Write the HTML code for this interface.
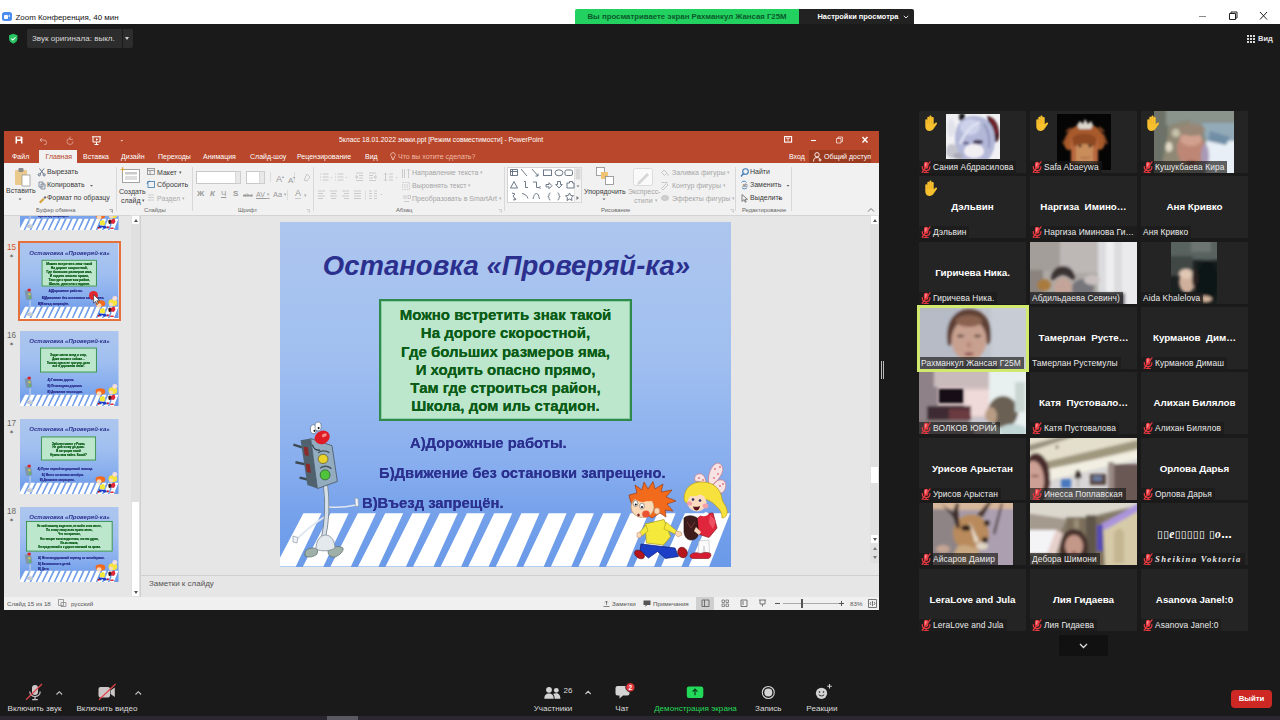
<!DOCTYPE html>
<html lang="ru">
<head>
<meta charset="utf-8">
<title>Zoom Конференция</title>
<style>
*{box-sizing:border-box;margin:0;padding:0}
html,body{width:1280px;height:720px;overflow:hidden;background:#1a1a1a;font-family:"Liberation Sans",sans-serif;}
.abs{position:absolute}
#titlebar{position:absolute;left:0;top:0;width:1280px;height:24px;background:#fff}
#titlebar .ttl{position:absolute;left:15.500px;top:12.500px;font-size:7.950px;line-height:10px;color:#111;white-space:nowrap}
#zicon{position:absolute;left:2px;top:12px;width:10px;height:9px;border-radius:2.5px;background:#4a8cf0}
#zicon i{position:absolute;left:2px;top:3px;width:4px;height:3.500px;background:#fff;border-radius:1px}
#zicon b{position:absolute;left:6.300px;top:3.300px;border:1.500px solid transparent;border-right:2px solid #fff;border-left:0}
#banner{position:absolute;left:575px;top:9px;width:224px;height:15px;background:#23d160;border-radius:2px 0 0 0;color:#0a5a2a;font-size:7.8px;font-weight:bold;text-align:center;line-height:15px;white-space:nowrap}
#viewset{position:absolute;left:799px;top:9px;width:115px;height:15px;background:#222;border-radius:0 2px 0 0;color:#fff;font-size:7.450px;font-weight:bold;text-align:left;padding-left:18.500px;line-height:15px;white-space:nowrap}
#origsnd{position:absolute;left:27px;top:29px;width:95px;height:19px;background:#2d2d2d;border-radius:2px 0 0 2px;color:#dcdcdc;font-size:8.050px;line-height:19px;padding-left:5px;white-space:nowrap}
#origdd{position:absolute;left:122.500px;top:29px;width:10px;height:19px;background:#2d2d2d;border-radius:0 2px 2px 0}
#origdd i{position:absolute;left:2.500px;top:8px;border:2.500px solid transparent;border-top:3px solid #d0d0d0;border-bottom:0}
#toolbar{position:absolute;left:0;top:0;width:1280px;height:0}
#toolbar svg{top:676px !important}
.tb{position:absolute;top:703.500px;font-size:8.100px;line-height:10px;color:#dcdcdc;white-space:nowrap;transform:translateX(-50%)}
#leave{position:absolute;left:1231px;top:690px;width:41px;height:18px;border-radius:4px;background:#cd2823;color:#fff;font-weight:bold;font-size:7.800px;line-height:18px;text-align:center}
#botstrip{position:absolute;left:0;top:716px;width:1280px;height:4px;background:#2a2730}
#bothandle{position:absolute;left:327px;top:716px;width:31px;height:4px;background:#5a5860}
/* participants */
.tile{position:absolute;width:107px;height:62px;background:#242424;overflow:hidden}
.tile .big{position:absolute;left:0;right:0;top:25px;text-align:center;color:#fff;font-weight:bold;font-size:9.8px;white-space:pre}
.tile .nm{position:absolute;left:0;bottom:0;height:12px;padding:0 3px 0 2px;background:rgba(26,26,26,.68);color:#ececec;font-size:8.4px;line-height:12px;white-space:nowrap;letter-spacing:.1px}
.tile .nm.m{padding-left:14px}
.mic{position:absolute;left:2px;bottom:0;width:10px;height:12.500px;z-index:2}
.hand{position:absolute;left:5.500px;top:4.200px;width:12.500px;height:16px;z-index:2}

.vid{position:absolute;top:0;left:0;overflow:hidden;line-height:0}
.vid svg{display:block}
.av1{left:27px;top:3px;width:54px;height:45px}
.av2{left:27px;top:3px;width:54px;height:56px}
.v3{left:13px;width:80px;height:62px}
.v9{left:30px;width:46px;height:62px}
.v19{left:14px;width:80px;height:62px}
.v8,.v10,.v13,.v17,.v20{width:107px;height:62px}
#active{position:absolute;left:917px;top:304.500px;width:112px;height:67px;border:3px solid #d2e970;pointer-events:none;z-index:5}
#morebtn{position:absolute;left:1059px;top:635px;width:49px;height:21px;background:#111;border-radius:2px;text-align:center;line-height:0}
#morebtn svg{margin-top:8px}
#handle{position:absolute;left:881px;top:361px;width:3px;height:18px;border-left:1px solid #bbb;border-right:1px solid #bbb}
.fancy{font-family:"Liberation Serif","DejaVu Serif",serif;font-style:italic;font-weight:bold;font-size:8.600px;letter-spacing:1.350px}
.tofu{font-family:"DejaVu Sans","Liberation Sans",sans-serif;letter-spacing:.3px;font-size:10.500px}
.tofu i{font-family:"Liberation Serif",serif;font-size:11.500px}
/* ppt */
#ppt{position:absolute;left:4px;top:131px;width:875px;height:479px;background:#e6e6e6;overflow:hidden}
#ppt .title{position:absolute;left:0;top:0;width:875px;height:32px;background:#b9472b}
#ppt .ribbon{position:absolute;left:0;top:32px;width:875px;height:53px;background:#f1f1f1;border-bottom:1px solid #d4d4d4}
#ppt .status{position:absolute;left:0;top:466px;width:875px;height:13px;background:#f0f0f0}

#ppt .t{position:absolute;white-space:nowrap;font-size:7px;color:#444;line-height:8px}
#ppt .tabs{position:absolute;left:0;top:19px;width:875px;height:13px}
#ppt .tabs .t{top:3px;color:#fff;font-size:7px}
#ppt .tabsel{position:absolute;left:35px;top:0;width:38px;height:13px;background:#f1f1f1}
#ppt .share{position:absolute;left:805px;top:0;width:62px;height:13px;background:#9c3a20}
#ppt .ribbon .t{color:#3b3b3b}
#ppt .ribbon .t.g{color:#aaa}
#ppt .ribbon .t.g2{color:#9a9a9a}
#ppt .ribbon .t.g3{color:#a6a6a6}
#ppt .ribbon .t.lb{color:#666;font-size:5.800px;line-height:7px;margin-top:-1px}
#ppt .status .t{font-size:6.200px;color:#555}
.dd{font-size:5px;vertical-align:1px;opacity:.8}
.stitle{position:absolute;left:0;top:28px;width:451px;text-align:center;font-size:27.500px;font-weight:bold;font-style:italic;color:#2b2f8e;white-space:nowrap;line-height:32px;padding-left:2px}
.gbox{position:absolute;left:99px;top:77px;width:253px;height:122px;background:#bde7cd;border:2.500px solid #2f8a4c;box-shadow:inset 0 0 0 1px #8fd0a6;text-shadow:0 0 .5px #0b5c17;text-align:center;font-weight:bold;font-size:15px;color:#0b5c17;line-height:18.300px;padding-top:5px;white-space:nowrap}
.ans{position:absolute;font-weight:bold;font-size:14.800px;color:#2c3190;white-space:nowrap;line-height:18px;margin-top:1px;text-shadow:0 0 .4px #2c3190}
.tpanel{position:absolute;left:0;top:85px;width:127px;height:381px;overflow:hidden}
.tpanel .th{position:absolute;left:16px;width:98.500px;height:75.400px;overflow:hidden;margin-top:-85px}
.tpanel .thin{position:absolute;left:0;top:0;width:451px;height:345px;transform:scale(.2185);transform-origin:0 0;background:linear-gradient(#adc6ee,#a0bff0 40%,#88aeee 70%,#729fea 88%,#6a9ae8)}
.tpanel .gbox{border-width:4px}
.tpanel .thsel{position:absolute;left:13.500px;top:24.500px;width:103.500px;height:80.500px;border:2px solid #e6703c;background:#fff}
.tpanel .t{margin-top:-85px}
.pscroll{position:absolute;left:127px;top:84px;width:9px;height:382px;background:#e0e0e0}
.rscroll{position:absolute;left:866px;top:84px;width:9px;height:348px;background:#e0e0e0}
.sbtn{position:absolute;left:1px;width:7px;height:8px;background:#fff}
.sbtn i{position:absolute;left:1.500px;top:2.500px;border:2px solid transparent}
.sbtn i.up{border-top:0;border-bottom:3px solid #555}
.sbtn i.dn{border-bottom:0;border-top:3px solid #555}
.sthumb{position:absolute;left:1px;width:7px;background:#fff}
.vsplit{position:absolute;left:136px;top:84px;width:1px;height:382px;background:#d0d0d0}
.notesline{position:absolute;left:137px;top:444px;width:738px;height:1px;background:#cfcfcf}
#slide{position:absolute;left:276px;top:91px;width:451px;height:345px;background:linear-gradient(#adc6ee,#a0bff0 40%,#88aeee 70%,#729fea 88%,#6a9ae8);overflow:hidden}
</style>
</head>
<body>
<div id="titlebar"><div id="zicon"><i></i><b></b></div><div class="ttl">Zoom Конференция, 40 мин</div></div>
<div id="banner">Вы просматриваете экран Рахманкул Жансая Г25М</div>
<div id="viewset">Настройки просмотра<svg class="abs" style="left:104px;top:6px" width="6" height="4" viewBox="0 0 6 4"><path d="M.8.800l2.200 2.200L5.200.800" fill="none" stroke="#ddd" stroke-width="1"/></svg></div>
<svg class="abs" style="left:1195px;top:8px" width="80" height="14" viewBox="0 0 80 14"><path d="M4 8.500h7" stroke="#8a8a8a" stroke-width="1"/><path d="M34.500 5.500h6v6h-6zM36 5.500V4h6v6h-1.500" fill="none" stroke="#222" stroke-width="1"/><path d="M65 4l7 7.500M72 4l-7 7.500" stroke="#222" stroke-width="1"/></svg>
<svg class="abs" style="left:8px;top:32.500px" width="10.500" height="11.500" viewBox="0 0 12 13"><path d="M6 .8l4.800 1.800v3.600c0 2.800-2 4.800-4.800 6-2.800-1.200-4.800-3.200-4.800-6V2.600z" fill="#28c463"/><path d="M3.800 6.300l1.700 1.700 3-3.200" fill="none" stroke="#fff" stroke-width="1.200"/></svg>
<div id="origsnd">Звук оригинала: выкл.</div><div id="origdd"><i></i></div>
<svg class="abs" style="left:1247px;top:34.500px" width="8" height="8" viewBox="0 0 8 8"><path d="M0 0h2v2H0zM3 0h2v2H3zM6 0h2v2H6zM0 3h2v2H0zM3 3h2v2H3zM6 3h2v2H6zM0 6h2v2H0zM3 6h2v2H3zM6 6h2v2H6z" fill="#d8d8d8"/></svg>
<div class="abs" style="left:1258px;top:33.500px;font-size:7.500px;line-height:10px;color:#e4e4e4;font-weight:bold">Вид</div>
<div id="ppt">
<div class="title">
 <svg class="abs" style="left:11px;top:5px" width="120" height="9" viewBox="0 0 120 9"><g fill="none" stroke="#fff" stroke-width="1"><path d="M.5.5h6l1 1v6h-7z" fill="#fff" stroke="none"/><rect x="2" y="1.200" width="3.500" height="2.200" fill="#b9472b" stroke="none"/><rect x="2" y="5" width="4" height="3" fill="#b9472b" stroke="none"/><g transform="translate(-3 0)"><path d="M30 2l-2 2 2 2M28 4h4a2.500 2.500 0 0 1 0 5" opacity=".45"/><path d="M58 2.500a3 3 0 1 0 3 3M58 .5v3h3" opacity=".4"/><path d="M80 .8h9M81 1v5h7V1M84.500 6v2M82.500 8.500h4"/><path d="M84 2.200v2.600l2.200-1.300z" fill="#fff" stroke="none"/></g><path d="M105.500 4h2.500l-1.250 1.500z" fill="#fff" stroke="none" opacity=".8"/></g></svg>
 <div class="t" style="left:335px;top:5px;width:204px;text-align:center;font-size:6.750px;color:#fff">5класс 18.01.2022 знаки.ppt [Режим совместимости] - PowerPoint</div>
 <svg class="abs" style="left:780px;top:4px" width="90" height="10" viewBox="0 0 90 10"><g fill="none" stroke="#fff" stroke-width="1.100"><rect x=".6" y="1.600" width="7" height="5.500"/><path d="M2 3.200h4M4 3.200v3" stroke-width=".8"/><path d="M27 5.500h5"/><path d="M52.500 3.500h4.500v4.500h-4.500zM54 3.500V2h4.500v4.500H57" stroke-width=".9" opacity=".75"/><path d="M78.500 2l5 5.500M83.500 2l-5 5.500" stroke-width="1.400"/></g></svg>
 <div class="tabs">
  <div class="t" style="left:8px">Файл</div>
  <div class="tabsel"></div><div class="t" style="left:41.500px;color:#b9472b">Главная</div>
  <div class="t" style="left:79px">Вставка</div>
  <div class="t" style="left:117px">Дизайн</div>
  <div class="t" style="left:154px">Переходы</div>
  <div class="t" style="left:199px">Анимация</div>
  <div class="t" style="left:246px">Слайд-шоу</div>
  <div class="t" style="left:293px">Рецензирование</div>
  <div class="t" style="left:361px">Вид</div>
  <svg class="abs" style="left:386px;top:2px" width="6" height="9" viewBox="0 0 6 9"><path d="M3 .6a2.300 2.300 0 0 0-1.300 4.200v1.400h2.600V4.800A2.300 2.300 0 0 0 3 .6zM2 7.500h2" fill="none" stroke="#f4c9b8" stroke-width=".8"/></svg>
  <div class="t" style="left:394px;color:#f0bba6">Что вы хотите сделать?</div>
  <div class="t" style="left:785px">Вход</div>
  <div class="share"></div>
  <svg class="abs" style="left:809px;top:1.500px" width="9" height="10" viewBox="0 0 9 10"><circle cx="4" cy="2.800" r="2.200" fill="none" stroke="#fff" stroke-width=".9"/><path d="M.5 9.500c0-3 1.500-4 3.500-4s2.600.8 3 1.600M7 6.500v3M5.600 8h2.900" fill="none" stroke="#fff" stroke-width=".9"/></svg>
  <div class="t" style="left:820px">Общий доступ</div>
 </div>
</div>
<div class="ribbon">
<svg class="abs" style="left:0;top:0" width="875" height="52" viewBox="0 0 875 52">
 <g stroke="#d8d8d8" stroke-width="1"><path d="M112.500 4v44M188.500 4v44M309.500 4v44M500.500 4v44M731.500 4v44M787.500 4v44"/></g>
 <!-- paste -->
 <rect x="11" y="7" width="12" height="15" rx="1" fill="#e9c98c"/><rect x="14.500" y="5" width="5" height="4" rx="1" fill="#8a8a8a"/><path d="M18 12h8v11h-8z" fill="#fff" stroke="#9a9a9a" stroke-width=".8"/>
 <path d="M14.500 35.500h3l-1.500 1.800z" fill="#666"/>
 <!-- cut copy brush -->
 <g fill="none" stroke="#5a6a80" stroke-width=".9"><path d="M35.500 5.500l4 5.500M40 5.500l-4 5.500"/><circle cx="35.300" cy="11.800" r="1.100"/><circle cx="40.200" cy="11.800" r="1.100"/><path d="M35 19h4v5h-4zM37 21h4v5h-4z" stroke="#7a8699"/></g>
 <path d="M35 39l4-4 1.500 1.500-4 4z" fill="#d9a23a"/><path d="M39.500 34.500l1.500-1.500 1.500 1.500-1.500 1.500z" fill="#6a6a6a"/>
 <path d="M86 22h3l-1.500 1.800z" fill="#666"/>
 <g fill="none" stroke="#777" stroke-width=".6"><path d="M105.500 46.500h3v3M106.500 47.500l2 2"/><path d="M302.500 46.500h3v3M303.500 47.500l2 2" stroke="#bbb"/><path d="M494.500 46.500h3v3M495.500 47.500l2 2" stroke="#bbb"/><path d="M726.500 46.500h3v3M727.500 47.500l2 2" stroke="#bbb"/></g>
 <!-- new slide -->
 <rect x="118.500" y="6.500" width="17" height="13" fill="#fff" stroke="#9a9a9a" stroke-width=".9"/><rect x="121" y="9" width="12" height="2.500" fill="#c9c9c9"/><rect x="121" y="13" width="12" height="4" fill="#dedede"/><path d="M118 5l1.500 0M116.500 6.500h4M118.500 4.500v4" stroke="#e0a030" stroke-width=".9"/>
 <g fill="none" stroke="#888" stroke-width=".8"><rect x="143.500" y="5.500" width="7" height="6"/><path d="M143.500 7.500h7M146 7.500v4"/><rect x="144" y="18.500" width="6.500" height="6" stroke="#3a7ab0"/><path d="M143 21a3 3 0 0 1 3-3" stroke="#3a7ab0"/><path d="M144 32h6M144 34.500h6M144 37h6" stroke="#c4c4c4"/></g>
 <!-- font boxes -->
 <rect x="192.500" y="8.500" width="44" height="12" fill="#fff" stroke="#c8c8c8"/><rect x="231.500" y="8.500" width="5" height="12" fill="#e8e8e8" stroke="#c8c8c8" stroke-width=".6"/>
 <rect x="242.500" y="8.500" width="18" height="12" fill="#fff" stroke="#c8c8c8"/><rect x="255.500" y="8.500" width="5" height="12" fill="#e8e8e8" stroke="#c8c8c8" stroke-width=".6"/>
 <path d="M300 17l3-6 3 3-3 4z" fill="none" stroke="#c2c2c2" stroke-width=".9"/>
 <path d="M266.500 9v10M290.500 9v10M283.500 27v10" stroke="#dcdcdc"/>
 <g stroke="#c6c6c6" stroke-width=".9" fill="none"><path d="M316 11h1M318.500 11h6M316 14h1M318.500 14h6M316 17h1M318.500 17h6"/><path d="M331 11h1M333.500 11h6M331 14h1M333.500 14h6M331 17h1M333.500 17h6"/><path d="M326.500 14h2l-1 1.200zM341.500 14h2l-1 1.200z" fill="#c6c6c6" stroke="none"/><path d="M352 10h7M355 12.500h4M355 15h4M352 17.500h7M352 12.500l2 1.500-2 1.500z"/><path d="M365 10h7M365 12.500h4M365 15h4M365 17.500h7M372 12.500l-2 1.500 2 1.500z"/><path d="M381.500 10v8M380 11.500l1.500-1.500 1.500 1.500M380 16.500l1.500 1.500 1.500-1.500M385 11h4M385 14h4M385 17h4"/><path d="M391.500 14h2l-1 1.200z" fill="#c6c6c6" stroke="none"/>
 <path d="M314 28h7M314 30.500h5M314 33h7M314 35.500h5"/><path d="M326 28h7M327 30.500h5M326 33h7M327 30.500h5M327 35.500h5"/><path d="M338 28h7M340 30.500h5M338 33h7M340 35.500h5"/><path d="M350 28h7M350 30.500h7M350 33h7M350 35.500h7"/><path d="M365 28h3M370 28h3M365 30.500h3M370 30.500h3M365 33h3M370 33h3M365 35.500h3M370 35.500h3"/><path d="M376.500 31h2l-1 1.200z" fill="#c6c6c6" stroke="none"/><path d="M361.500 27v10" stroke="#dcdcdc"/>
 <path d="M398.500 6v9M400.500 6v9M403 7.500l1.500-1.500 1.500 1.500M404.500 6v9"/><path d="M398.500 19.500h7v7h-7zM400 22h4M400 24h4" stroke-dasharray="1.500 1"/><path d="M399 33h4M399 35h4M404 32.500h2.500v3H404zM400 38.500h5"/></g>
 <!-- shapes gallery -->
 <rect x="503.500" y="4.500" width="74" height="35" fill="#fff" stroke="#d2d2d2"/><rect x="570.500" y="4.500" width="7" height="35" fill="#f4f4f4" stroke="#d2d2d2" stroke-width=".6"/><rect x="571.500" y="5.500" width="5" height="11" fill="#d9d9d9"/>
 <path d="M572.500 22.500h3l-1.500 1.800zM572.500 33l2.500 2-2.500 2" fill="#777" stroke="none"/>
 <g fill="none" stroke="#5f6b7a" stroke-width=".9"><path d="M506.500 6.500h7v6h-7zM506.500 8.500h7M508.500 6.500v6"/><path d="M517 6l6 7M528 6l6 7M534 13v-2.500M534 13h-2.500"/><rect x="539.500" y="7" width="8" height="5.500"/><ellipse cx="555" cy="9.800" rx="4" ry="3"/><rect x="561" y="7" width="7.500" height="5.500" rx="1.500"/>
 <path d="M510 18.500l3.500 6.500h-7zM520 18.500h1.500v6h2.500M529 19h3.500v5.500h3M536.500 26l-1.200-1.500 1.200-1.500M542 21.500h3v-1.800l3 3-3 3v-1.800h-3zM553.500 18.500h3v3h1.800l-3.300 3.500-3.300-3.500h1.800zM563 25v-5h2.500v-1.500h3v1.500H570v5z"/>
 <path d="M508 30l3 1-2 2 3 4M511 37l-1.800-.2M511 37l.2-1.800M518 30.500c3 .5 5 2 6 5M529 36c1-4 2-5.500 3.500-5.500s2 2 3 5.500M546.500 30c-1.500 0-1.500 1.200-1.500 2s-.3 1.500-1.200 1.500c.9 0 1.200.8 1.200 1.500s0 2 1.500 2M553.500 30c1.500 0 1.500 1.200 1.500 2s.3 1.500 1.200 1.500c-.9 0-1.200.8-1.200 1.500s0 2-1.500 2M565.500 30l1.200 2.500 2.800.3-2 1.900.5 2.800-2.500-1.400-2.500 1.400.5-2.800-2-1.900 2.800-.3z"/></g>
 <!-- arrange -->
 <rect x="592.500" y="4.500" width="8" height="8" fill="#fff" stroke="#8a8a8a" stroke-width=".8"/><rect x="597" y="9" width="7" height="7" fill="#eec372"/><rect x="601.500" y="13.500" width="8" height="8" fill="#fff" stroke="#8a8a8a" stroke-width=".8"/>
 <path d="M598.500 35.500h3l-1.500 1.800z" fill="#666"/>
 <!-- express styles -->
 <rect x="629.500" y="5.500" width="19" height="17" rx="2" fill="#fafafa" stroke="#dcdcdc"/><path d="M634 19l9-9 2 2-9 9-3 1z" fill="#d6d6d6"/>
 <g fill="none" stroke="#c2c2c2" stroke-width=".9"><path d="M660 7l3 3-2.500 2.500-3-3zM663.500 10.500c1 1 1 2 .5 2.500"/><path d="M657.500 19.500h6M657.500 25.500l5-5 1.500 1.500-5 5z"/><ellipse cx="661" cy="35" rx="3.500" ry="2.500" fill="#d0d0d0"/></g>
 <!-- find -->
 <circle cx="741.500" cy="8.500" r="2.800" fill="none" stroke="#3a7ab8" stroke-width="1.100"/><path d="M739.500 10.500l-2.500 3" stroke="#3a7ab8" stroke-width="1.300"/>
 <path d="M737.500 19.500a3 3 0 0 1 5 0M743 24.500a3 3 0 0 1-5 0" fill="none" stroke="#3a7ab8" stroke-width=".9"/><text x="738.500" y="24" font-size="4.500" fill="#555" font-family="Liberation Sans, sans-serif">ab</text>
 <path d="M738 31.500v7l2-1.800 1.300 2.600 1-.5-1.300-2.500h2.500z" fill="none" stroke="#666" stroke-width=".8"/>
 <path d="M782.500 22h3l-1.500 1.800zM774 35h3l-1.500 1.800z" fill="#666"/>
 <path d="M864 48.500l3-3 3 3" fill="none" stroke="#666" stroke-width=".9"/>
</svg>
<div class="t" style="left:2px;top:24px">Вставить</div>
<div class="t" style="left:43px;top:5px">Вырезать</div>
<div class="t" style="left:43px;top:18px">Копировать</div>
<div class="t" style="left:43px;top:31px">Формат по образцу</div>
<div class="t lb" style="left:32px;top:45px">Буфер обмена</div>
<div class="t" style="left:115px;top:25px">Создать</div>
<div class="t" style="left:117px;top:33px">слайд <span class="dd">▾</span></div>
<div class="t" style="left:153px;top:5px">Макет <span class="dd">▾</span></div>
<div class="t" style="left:153px;top:18px">Сбросить</div>
<div class="t g" style="left:153px;top:31px">Раздел <span class="dd">▾</span></div>
<div class="t lb" style="left:140px;top:45px">Слайды</div>
<div class="t g2" style="left:272px;top:9px;font-size:9px;line-height:10px">A<sup style="font-size:4px">▴</sup></div>
<div class="t g2" style="left:284px;top:10px;font-size:8px;line-height:10px">A<sup style="font-size:4px">▾</sup></div>
<div class="t g2" style="left:193px;top:27px;font-size:8px;font-weight:bold">Ж</div>
<div class="t g2" style="left:206px;top:27px;font-size:8px;font-style:italic;font-weight:bold">К</div>
<div class="t g2" style="left:217px;top:27px;font-size:8px;text-decoration:underline">Ч</div>
<div class="t g2" style="left:229px;top:27px;font-size:8px;font-weight:bold">S</div>
<div class="t g2" style="left:239px;top:28px;font-size:6px;text-decoration:line-through">abc</div>
<div class="t g2" style="left:252px;top:27px;font-size:7px;text-decoration:underline">AV <span class="dd">▾</span></div>
<div class="t g2" style="left:269px;top:27px;font-size:7.500px">Aa <span class="dd">▾</span></div>
<div class="t g2" style="left:291px;top:26px;font-size:9px;border-bottom:1.500px solid #c9c9c9;line-height:9px">A</div><div class="t g2" style="left:300px;top:28px"><span class="dd">▾</span></div>
<div class="t lb" style="left:234px;top:45px">Шрифт</div>
<div class="t g3" style="left:408px;top:5px">Направление текста <span class="dd">▾</span></div>
<div class="t g3" style="left:408px;top:18px">Выровнять текст <span class="dd">▾</span></div>
<div class="t g3" style="left:408px;top:31px">Преобразовать в SmartArt <span class="dd">▾</span></div>
<div class="t lb" style="left:392px;top:45px">Абзац</div>
<div class="t" style="left:580px;top:25px">Упорядочить</div>
<div class="t g3" style="left:624px;top:25px">Экспресс-</div>
<div class="t g3" style="left:630px;top:33px">стили <span class="dd">▾</span></div>
<div class="t g3" style="left:668px;top:5px">Заливка фигуры <span class="dd">▾</span></div>
<div class="t g3" style="left:668px;top:18px">Контур фигуры <span class="dd">▾</span></div>
<div class="t g3" style="left:668px;top:31px">Эффекты фигуры <span class="dd">▾</span></div>
<div class="t lb" style="left:597px;top:45px">Рисование</div>
<div class="t" style="left:746px;top:5px">Найти</div>
<div class="t" style="left:746px;top:18px">Заменить</div>
<div class="t" style="left:746px;top:31px">Выделить</div>
<div class="t lb" style="left:738px;top:45px">Редактирование</div>

</div>
<div class="tpanel"><div class="th" style="top:24px"><div class="thin"><svg class="abs" style="left:0;top:0" width="451" height="345" viewBox="0 0 451 345"><path d="M23.4 291.3 h18 L15.8 344.6 h-20.500 z M50.6 291.3 h18 L43.4 344.6 h-20.500 z M77.9 291.3 h18 L70.9 344.6 h-20.500 z M105.2 291.3 h18 L98.5 344.6 h-20.500 z M132.4 291.3 h18 L126.0 344.6 h-20.500 z M159.7 291.3 h18 L153.6 344.6 h-20.500 z M186.9 291.3 h18 L181.2 344.6 h-20.500 z M214.2 291.3 h18 L208.7 344.6 h-20.500 z M241.4 291.3 h18 L236.3 344.6 h-20.500 z M268.6 291.3 h18 L263.8 344.6 h-20.500 z M295.9 291.3 h18 L291.4 344.6 h-20.500 z M323.1 291.3 h18 L319.0 344.6 h-20.500 z M350.4 291.3 h18 L346.5 344.6 h-20.500 z M377.6 291.3 h18 L374.1 344.6 h-20.500 z M404.9 291.3 h18 L401.6 344.6 h-20.500 z M432.1 291.3 h18 L429.2 344.6 h-20.500 z" fill="#fff"/><g><path d="M21 218l10-1.500L51.500 223l5 32-19 7-10-3z" fill="#7f98ac"/><ellipse cx="42" cy="215" rx="8" ry="7" fill="#df1f26"/><ellipse cx="43" cy="235" rx="5" ry="4.500" fill="#e9d22c"/><ellipse cx="45" cy="249.500" rx="5" ry="4.500" fill="#4fc43a"/><path d="M45.500 263Q49 290 43.500 316" stroke="#d6dfe8" stroke-width="4" fill="none"/><ellipse cx="45" cy="326" rx="14" ry="9" fill="#c4ccd2"/>
<ellipse cx="368" cy="277" rx="22" ry="15" fill="#f26a1e"/><ellipse cx="362" cy="286" rx="11" ry="10" fill="#fbd8b6"/><path d="M365 302l19-4 7 17-7 8-17-2z" fill="#f5e93a"/><path d="M361 322l34 4 3 9-13 2-8-7-9 6-8-7z" fill="#1d3cc6"/><ellipse cx="360" cy="333" rx="6" ry="4" fill="#b4161f"/><ellipse cx="402" cy="331" rx="5" ry="5" fill="#b4161f"/>
<ellipse cx="425" cy="274" rx="20" ry="16" fill="#f7e23e"/><ellipse cx="434" cy="253" rx="11" ry="11" fill="#f7dede"/><ellipse cx="417" cy="281" rx="9" ry="9" fill="#fbdcc0"/><path d="M417 296l16-5 4 15-8 10-13-4z" fill="#e0283c"/><ellipse cx="411" cy="306" rx="7" ry="11" fill="#3c1d1e"/><rect x="419" y="316" width="10" height="15" fill="#fafafa"/><ellipse cx="421" cy="335" rx="10" ry="3.500" fill="#d61f30"/></g></svg><div class="stitle">Остановка «Проверяй-ка»</div><div class="gbox" style="left:99px;top:77px;width:253px;height:122px;padding-top:5px;font-size:15px;line-height:18.3px"><div>Можно встретить знак такой</div><div>На дороге скоростной,</div><div>Где больших размеров яма,</div><div>И ходить опасно прямо,</div><div>Там где строиться район,</div><div>Школа, дом иль стадион.</div></div><div class="ans" style="left:130px;top:211px;font-size:14.8px">А)Дорожные работы.</div><div class="ans" style="left:99px;top:241px;font-size:14.8px">Б)Движение без остановки запрещено.</div><div class="ans" style="left:82px;top:271px;font-size:14.8px">В)Въезд запрещён.</div></div></div>
<div class="thsel"></div>
<div class="th" style="top:112px"><div class="thin"><svg class="abs" style="left:0;top:0" width="451" height="345" viewBox="0 0 451 345"><path d="M23.4 291.3 h18 L15.8 344.6 h-20.500 z M50.6 291.3 h18 L43.4 344.6 h-20.500 z M77.9 291.3 h18 L70.9 344.6 h-20.500 z M105.2 291.3 h18 L98.5 344.6 h-20.500 z M132.4 291.3 h18 L126.0 344.6 h-20.500 z M159.7 291.3 h18 L153.6 344.6 h-20.500 z M186.9 291.3 h18 L181.2 344.6 h-20.500 z M214.2 291.3 h18 L208.7 344.6 h-20.500 z M241.4 291.3 h18 L236.3 344.6 h-20.500 z M268.6 291.3 h18 L263.8 344.6 h-20.500 z M295.9 291.3 h18 L291.4 344.6 h-20.500 z M323.1 291.3 h18 L319.0 344.6 h-20.500 z M350.4 291.3 h18 L346.5 344.6 h-20.500 z M377.6 291.3 h18 L374.1 344.6 h-20.500 z M404.9 291.3 h18 L401.6 344.6 h-20.500 z M432.1 291.3 h18 L429.2 344.6 h-20.500 z" fill="#fff"/><g><path d="M21 218l10-1.500L51.500 223l5 32-19 7-10-3z" fill="#7f98ac"/><ellipse cx="42" cy="215" rx="8" ry="7" fill="#df1f26"/><ellipse cx="43" cy="235" rx="5" ry="4.500" fill="#e9d22c"/><ellipse cx="45" cy="249.500" rx="5" ry="4.500" fill="#4fc43a"/><path d="M45.500 263Q49 290 43.500 316" stroke="#d6dfe8" stroke-width="4" fill="none"/><ellipse cx="45" cy="326" rx="14" ry="9" fill="#c4ccd2"/>
<ellipse cx="368" cy="277" rx="22" ry="15" fill="#f26a1e"/><ellipse cx="362" cy="286" rx="11" ry="10" fill="#fbd8b6"/><path d="M365 302l19-4 7 17-7 8-17-2z" fill="#f5e93a"/><path d="M361 322l34 4 3 9-13 2-8-7-9 6-8-7z" fill="#1d3cc6"/><ellipse cx="360" cy="333" rx="6" ry="4" fill="#b4161f"/><ellipse cx="402" cy="331" rx="5" ry="5" fill="#b4161f"/>
<ellipse cx="425" cy="274" rx="20" ry="16" fill="#f7e23e"/><ellipse cx="434" cy="253" rx="11" ry="11" fill="#f7dede"/><ellipse cx="417" cy="281" rx="9" ry="9" fill="#fbdcc0"/><path d="M417 296l16-5 4 15-8 10-13-4z" fill="#e0283c"/><ellipse cx="411" cy="306" rx="7" ry="11" fill="#3c1d1e"/><rect x="419" y="316" width="10" height="15" fill="#fafafa"/><ellipse cx="421" cy="335" rx="10" ry="3.500" fill="#d61f30"/></g></svg><div class="stitle">Остановка «Проверяй-ка»</div><div class="gbox" style="left:99px;top:77px;width:253px;height:122px;padding-top:5px;font-size:15px;line-height:18.3px"><div>Можно встретить знак такой</div><div>На дороге скоростной,</div><div>Где больших размеров яма,</div><div>И ходить опасно прямо,</div><div>Там где строиться район,</div><div>Школа, дом иль стадион.</div></div><div class="ans" style="left:130px;top:211px;font-size:14.8px">А)Дорожные работы.</div><div class="ans" style="left:99px;top:241px;font-size:14.8px">Б)Движение без остановки запрещено.</div><div class="ans" style="left:82px;top:271px;font-size:14.8px">В)Въезд запрещён.</div></div><div class="abs" style="left:69px;top:48px;width:9px;height:9px;border-radius:50%;background:#e0282e"></div><svg class="abs" style="left:73px;top:51px" width="8" height="11" viewBox="0 0 8 11"><path d="M.6.6v8.500l2-1.800 1.400 3 1.300-.6-1.400-3h2.800z" fill="#fff" stroke="#222" stroke-width=".6"/></svg></div>
<div class="th" style="top:200px"><div class="thin"><svg class="abs" style="left:0;top:0" width="451" height="345" viewBox="0 0 451 345"><path d="M23.4 291.3 h18 L15.8 344.6 h-20.500 z M50.6 291.3 h18 L43.4 344.6 h-20.500 z M77.9 291.3 h18 L70.9 344.6 h-20.500 z M105.2 291.3 h18 L98.5 344.6 h-20.500 z M132.4 291.3 h18 L126.0 344.6 h-20.500 z M159.7 291.3 h18 L153.6 344.6 h-20.500 z M186.9 291.3 h18 L181.2 344.6 h-20.500 z M214.2 291.3 h18 L208.7 344.6 h-20.500 z M241.4 291.3 h18 L236.3 344.6 h-20.500 z M268.6 291.3 h18 L263.8 344.6 h-20.500 z M295.9 291.3 h18 L291.4 344.6 h-20.500 z M323.1 291.3 h18 L319.0 344.6 h-20.500 z M350.4 291.3 h18 L346.5 344.6 h-20.500 z M377.6 291.3 h18 L374.1 344.6 h-20.500 z M404.9 291.3 h18 L401.6 344.6 h-20.500 z M432.1 291.3 h18 L429.2 344.6 h-20.500 z" fill="#fff"/><g><path d="M21 218l10-1.500L51.500 223l5 32-19 7-10-3z" fill="#7f98ac"/><ellipse cx="42" cy="215" rx="8" ry="7" fill="#df1f26"/><ellipse cx="43" cy="235" rx="5" ry="4.500" fill="#e9d22c"/><ellipse cx="45" cy="249.500" rx="5" ry="4.500" fill="#4fc43a"/><path d="M45.500 263Q49 290 43.500 316" stroke="#d6dfe8" stroke-width="4" fill="none"/><ellipse cx="45" cy="326" rx="14" ry="9" fill="#c4ccd2"/>
<ellipse cx="368" cy="277" rx="22" ry="15" fill="#f26a1e"/><ellipse cx="362" cy="286" rx="11" ry="10" fill="#fbd8b6"/><path d="M365 302l19-4 7 17-7 8-17-2z" fill="#f5e93a"/><path d="M361 322l34 4 3 9-13 2-8-7-9 6-8-7z" fill="#1d3cc6"/><ellipse cx="360" cy="333" rx="6" ry="4" fill="#b4161f"/><ellipse cx="402" cy="331" rx="5" ry="5" fill="#b4161f"/>
<ellipse cx="425" cy="274" rx="20" ry="16" fill="#f7e23e"/><ellipse cx="434" cy="253" rx="11" ry="11" fill="#f7dede"/><ellipse cx="417" cy="281" rx="9" ry="9" fill="#fbdcc0"/><path d="M417 296l16-5 4 15-8 10-13-4z" fill="#e0283c"/><ellipse cx="411" cy="306" rx="7" ry="11" fill="#3c1d1e"/><rect x="419" y="316" width="10" height="15" fill="#fafafa"/><ellipse cx="421" cy="335" rx="10" ry="3.500" fill="#d61f30"/></g></svg><div class="stitle">Остановка «Проверяй-ка»</div><div class="gbox" style="left:92px;top:76px;width:260px;height:114px;padding-top:22px;font-size:13px;line-height:17px"><div>Ходят смело млад и стар,</div><div>Даже кошки и собаки…</div><div>Только здесь не тротуар, дело</div><div>всё в дорожном знаке.</div></div><div class="ans" style="left:126px;top:215px;font-size:13px">А) Главная дорога.</div><div class="ans" style="left:126px;top:243px;font-size:13px">Б) Пешеходная дорожка.</div><div class="ans" style="left:126px;top:270px;font-size:13px">В) Движение пешеходов.</div></div></div>
<div class="th" style="top:288px"><div class="thin"><svg class="abs" style="left:0;top:0" width="451" height="345" viewBox="0 0 451 345"><path d="M23.4 291.3 h18 L15.8 344.6 h-20.500 z M50.6 291.3 h18 L43.4 344.6 h-20.500 z M77.9 291.3 h18 L70.9 344.6 h-20.500 z M105.2 291.3 h18 L98.5 344.6 h-20.500 z M132.4 291.3 h18 L126.0 344.6 h-20.500 z M159.7 291.3 h18 L153.6 344.6 h-20.500 z M186.9 291.3 h18 L181.2 344.6 h-20.500 z M214.2 291.3 h18 L208.7 344.6 h-20.500 z M241.4 291.3 h18 L236.3 344.6 h-20.500 z M268.6 291.3 h18 L263.8 344.6 h-20.500 z M295.9 291.3 h18 L291.4 344.6 h-20.500 z M323.1 291.3 h18 L319.0 344.6 h-20.500 z M350.4 291.3 h18 L346.5 344.6 h-20.500 z M377.6 291.3 h18 L374.1 344.6 h-20.500 z M404.9 291.3 h18 L401.6 344.6 h-20.500 z M432.1 291.3 h18 L429.2 344.6 h-20.500 z" fill="#fff"/><g><path d="M21 218l10-1.500L51.500 223l5 32-19 7-10-3z" fill="#7f98ac"/><ellipse cx="42" cy="215" rx="8" ry="7" fill="#df1f26"/><ellipse cx="43" cy="235" rx="5" ry="4.500" fill="#e9d22c"/><ellipse cx="45" cy="249.500" rx="5" ry="4.500" fill="#4fc43a"/><path d="M45.500 263Q49 290 43.500 316" stroke="#d6dfe8" stroke-width="4" fill="none"/><ellipse cx="45" cy="326" rx="14" ry="9" fill="#c4ccd2"/>
<ellipse cx="368" cy="277" rx="22" ry="15" fill="#f26a1e"/><ellipse cx="362" cy="286" rx="11" ry="10" fill="#fbd8b6"/><path d="M365 302l19-4 7 17-7 8-17-2z" fill="#f5e93a"/><path d="M361 322l34 4 3 9-13 2-8-7-9 6-8-7z" fill="#1d3cc6"/><ellipse cx="360" cy="333" rx="6" ry="4" fill="#b4161f"/><ellipse cx="402" cy="331" rx="5" ry="5" fill="#b4161f"/>
<ellipse cx="425" cy="274" rx="20" ry="16" fill="#f7e23e"/><ellipse cx="434" cy="253" rx="11" ry="11" fill="#f7dede"/><ellipse cx="417" cy="281" rx="9" ry="9" fill="#fbdcc0"/><path d="M417 296l16-5 4 15-8 10-13-4z" fill="#e0283c"/><ellipse cx="411" cy="306" rx="7" ry="11" fill="#3c1d1e"/><rect x="419" y="316" width="10" height="15" fill="#fafafa"/><ellipse cx="421" cy="335" rx="10" ry="3.500" fill="#d61f30"/></g></svg><div class="stitle">Остановка «Проверяй-ка»</div><div class="gbox" style="left:96px;top:80px;width:252px;height:110px;padding-top:20px;font-size:13px;line-height:17px"><div>Заболел живот у Ромы,</div><div>Не дойти ему до дома.</div><div>В ситуации такой</div><div>Нужно знак найти. Какой?</div></div><div class="ans" style="left:80px;top:218px;font-size:13px">А) Пункт первой медицинской помощи.</div><div class="ans" style="left:100px;top:245px;font-size:13px">Б) Место остановки автобуса.</div><div class="ans" style="left:90px;top:271px;font-size:13px">В) Движение запрещено.</div></div></div>
<div class="th" style="top:375.5px"><div class="thin"><svg class="abs" style="left:0;top:0" width="451" height="345" viewBox="0 0 451 345"><path d="M23.4 291.3 h18 L15.8 344.6 h-20.500 z M50.6 291.3 h18 L43.4 344.6 h-20.500 z M77.9 291.3 h18 L70.9 344.6 h-20.500 z M105.2 291.3 h18 L98.5 344.6 h-20.500 z M132.4 291.3 h18 L126.0 344.6 h-20.500 z M159.7 291.3 h18 L153.6 344.6 h-20.500 z M186.9 291.3 h18 L181.2 344.6 h-20.500 z M214.2 291.3 h18 L208.7 344.6 h-20.500 z M241.4 291.3 h18 L236.3 344.6 h-20.500 z M268.6 291.3 h18 L263.8 344.6 h-20.500 z M295.9 291.3 h18 L291.4 344.6 h-20.500 z M323.1 291.3 h18 L319.0 344.6 h-20.500 z M350.4 291.3 h18 L346.5 344.6 h-20.500 z M377.6 291.3 h18 L374.1 344.6 h-20.500 z M404.9 291.3 h18 L401.6 344.6 h-20.500 z M432.1 291.3 h18 L429.2 344.6 h-20.500 z" fill="#fff"/><g><path d="M21 218l10-1.500L51.500 223l5 32-19 7-10-3z" fill="#7f98ac"/><ellipse cx="42" cy="215" rx="8" ry="7" fill="#df1f26"/><ellipse cx="43" cy="235" rx="5" ry="4.500" fill="#e9d22c"/><ellipse cx="45" cy="249.500" rx="5" ry="4.500" fill="#4fc43a"/><path d="M45.500 263Q49 290 43.500 316" stroke="#d6dfe8" stroke-width="4" fill="none"/><ellipse cx="45" cy="326" rx="14" ry="9" fill="#c4ccd2"/>
<ellipse cx="368" cy="277" rx="22" ry="15" fill="#f26a1e"/><ellipse cx="362" cy="286" rx="11" ry="10" fill="#fbd8b6"/><path d="M365 302l19-4 7 17-7 8-17-2z" fill="#f5e93a"/><path d="M361 322l34 4 3 9-13 2-8-7-9 6-8-7z" fill="#1d3cc6"/><ellipse cx="360" cy="333" rx="6" ry="4" fill="#b4161f"/><ellipse cx="402" cy="331" rx="5" ry="5" fill="#b4161f"/>
<ellipse cx="425" cy="274" rx="20" ry="16" fill="#f7e23e"/><ellipse cx="434" cy="253" rx="11" ry="11" fill="#f7dede"/><ellipse cx="417" cy="281" rx="9" ry="9" fill="#fbdcc0"/><path d="M417 296l16-5 4 15-8 10-13-4z" fill="#e0283c"/><ellipse cx="411" cy="306" rx="7" ry="11" fill="#3c1d1e"/><rect x="419" y="316" width="10" height="15" fill="#fafafa"/><ellipse cx="421" cy="335" rx="10" ry="3.500" fill="#d61f30"/></g></svg><div class="stitle">Остановка «Проверяй-ка»</div><div class="gbox" style="left:28px;top:64px;width:396px;height:140px;padding-top:10px;font-size:12.5px;line-height:19.5px"><div>Не мой машину водитель, не мой в этом месте,</div><div>По этому знаку всем нужно знать,</div><div>Что ты приехал,</div><div>Но говорит всем водителям, что вы дурак,</div><div>Из-за знаков,</div><div>Он предельный и к дороге выезжай на права.</div></div><div class="ans" style="left:82px;top:223px;font-size:13px">А) Железнодорожный переезд со шлагбаумом.</div><div class="ans" style="left:82px;top:250px;font-size:13px">Б) Безопасность детей.</div><div class="ans" style="left:82px;top:276px;font-size:13px">В) Дети.</div></div></div>
<div class="t" style="left:3px;top:112px;font-size:8.200px;line-height:9px;color:#d2562a">15</div><div class="t" style="left:5px;top:121px;font-size:6px;color:#666">✶</div>
<div class="t" style="left:3px;top:200px;font-size:8.200px;line-height:9px;color:#666">16</div><div class="t" style="left:5px;top:209px;font-size:6px;color:#666">✶</div>
<div class="t" style="left:3px;top:288px;font-size:8.200px;line-height:9px;color:#666">17</div><div class="t" style="left:5px;top:297px;font-size:6px;color:#666">✶</div>
<div class="t" style="left:3px;top:375.5px;font-size:8.200px;line-height:9px;color:#666">18</div><div class="t" style="left:5px;top:384.5px;font-size:6px;color:#666">✶</div></div>

<div class="pscroll"><div class="sbtn" style="top:1px"><i class="up"></i></div><div class="sthumb" style="top:287px;height:86px"></div><div class="sbtn" style="top:373px"><i class="dn"></i></div></div>
<div class="vsplit"></div>
<div id="slide">
<svg class="abs" style="left:0;top:0" width="451" height="345" viewBox="0 0 451 345">
<path d="M23.4 291.3 h18 L15.8 344.6 h-20.500 z M50.6 291.3 h18 L43.4 344.6 h-20.500 z M77.9 291.3 h18 L70.9 344.6 h-20.500 z M105.2 291.3 h18 L98.5 344.6 h-20.500 z M132.4 291.3 h18 L126.0 344.6 h-20.500 z M159.7 291.3 h18 L153.6 344.6 h-20.500 z M186.9 291.3 h18 L181.2 344.6 h-20.500 z M214.2 291.3 h18 L208.7 344.6 h-20.500 z M241.4 291.3 h18 L236.3 344.6 h-20.500 z M268.6 291.3 h18 L263.8 344.6 h-20.500 z M295.9 291.3 h18 L291.4 344.6 h-20.500 z M323.1 291.3 h18 L319.0 344.6 h-20.500 z M350.4 291.3 h18 L346.5 344.6 h-20.500 z M377.6 291.3 h18 L374.1 344.6 h-20.500 z M404.9 291.3 h18 L401.6 344.6 h-20.500 z M432.1 291.3 h18 L429.2 344.6 h-20.500 z" fill="#fff"/>
<!--C0--><g filter="url(#b0)">
<!-- traffic light -->
<g stroke-linejoin="round">
<path d="M46 294 Q30 304 18 316" fill="none" stroke="#dfe6ee" stroke-width="1.800"/><path d="M13 314l5 1.500-1 5.500-4-1z" fill="#eef2f6" stroke="#7d8c99" stroke-width=".6"/>
<path d="M49 285 Q62 286 76 283" fill="none" stroke="#dfe6ee" stroke-width="1.600"/><path d="M75 276l3 .5.500 7.500-3 .5z" fill="#f2f5f8" stroke="#8695a3" stroke-width=".6"/>
<path d="M45.500 263 Q49 290 43.500 316" fill="none" stroke="#6f7f8c" stroke-width="5"/><path d="M45.500 263 Q49 290 43.500 316" fill="none" stroke="#d6dfe8" stroke-width="3.400"/>
<path d="M25 330c2-4 8-5 13-3l-1 5c-3 3-9 4-12 2z" fill="#9fb0a8" stroke="#5b6a66" stroke-width=".7"/>
<path d="M48 329c3-4 10-6 15-3 1 3-3 7-8 9-4 1-7-2-7-6z" fill="#9fb0a8" stroke="#5b6a66" stroke-width=".7"/>
<path d="M36 327c0-8 4-14 9.500-14s9.500 6 9.500 13c-4 3-14 4-19 1z" fill="#e4e9ee" stroke="#7a8995" stroke-width=".8"/>
<g transform="translate(0 216) scale(1.03 1.1) translate(-1 -216)"><path d="M14 222l10 3M16 238l10 2M20 252l9 2" stroke="#3d4a52" stroke-width="2.200" fill="none"/>
<path d="M21 218l9.800-1.500 6.500 45.500-9.700-3.300z" fill="#4f626e"/>
<path d="M30.800 216.500L51.500 223l5.200 32.500-19.400 6.500z" fill="#93acc0" stroke="#4a5c68" stroke-width=".8"/>
<path d="M24 224l4 .5 1 8-4-1zM26 239l4 .8 1 8-4-1.200z" fill="#8c2a2a"/>
<ellipse cx="42.800" cy="235" rx="4.800" ry="4.200" fill="#e9d22c" stroke="#5a5a30" stroke-width=".7"/>
<ellipse cx="44.800" cy="249.500" rx="4.800" ry="4.600" fill="#4fc43a" stroke="#2f5a2a" stroke-width=".7"/>
<path d="M38 229.500c3-2.500 8-2.500 11 0M40 243.500c3-2.500 8-2.500 11 .5" stroke="#44535e" stroke-width="1.200" fill="none"/>
<path d="M32.500 222c1 3.500 4 5.500 7.500 5" stroke="#2d3a42" stroke-width="1.100" fill="none"/>
<ellipse cx="33.500" cy="208" rx="3" ry="4" fill="#fff" stroke="#55636e" stroke-width=".6"/><ellipse cx="38" cy="205.500" rx="3" ry="4" fill="#fff" stroke="#55636e" stroke-width=".6"/>
<circle cx="34.500" cy="209.500" r="1" fill="#111"/><circle cx="38.500" cy="207" r="1" fill="#111"/>
<ellipse cx="42" cy="215.500" rx="7.500" ry="6" fill="#df1f26" transform="rotate(-20 42 215.500)"/><ellipse cx="44" cy="213.500" rx="2.500" ry="1.500" fill="#f58a8a" transform="rotate(-20 44 213.500)"/>
</g>
</g>
<!-- girl -->
<g>
<path d="M415 259c-2-6 4-9 8-6 2 2 3 5 3 8zM429 262c-2-8 2-19 8-21 5 0 7 5 5 10-2 5-6 9-9 12zM433 262c4-4 9-6 12-2 2 4 0 9-3 11-4 0-7-4-9-9z" fill="#f7e3e3" stroke="#c97a86" stroke-width=".7"/>
<g fill="#d8344a"><circle cx="419" cy="256" r=".8"/><circle cx="423" cy="258" r=".8"/><circle cx="435" cy="247" r=".8"/><circle cx="438" cy="252" r=".8"/><circle cx="434" cy="256" r=".8"/><circle cx="440" cy="245" r=".8"/><circle cx="440" cy="264" r=".8"/><circle cx="437" cy="267" r=".8"/><circle cx="443" cy="262" r=".8"/></g>
<path d="M404 277c0-11 8-18 19-17 10 0 18 7 19 17 1 4 4 6 5 11 1 5-2 8-5 8 0-5-2-9-6-12-6-8-20-10-26-4-3 2-5 1-6-3z" fill="#f7e23e" stroke="#b89b1a" stroke-width=".7"/>
<ellipse cx="417" cy="280.500" rx="9.500" ry="9" fill="#fbdcc0"/>
<path d="M406 272c4-6 16-8 24-3-2 4-6 4-9 3-5 3-11 3-15 0z" fill="#f7e23e"/>
<ellipse cx="409.500" cy="281.500" rx="2.600" ry="2.200" fill="#f3a0a8"/><ellipse cx="425.500" cy="284" rx="2.800" ry="2.400" fill="#f3a0a8"/>
<circle cx="413" cy="277.500" r="1.300" fill="#2a2a60"/><circle cx="420" cy="278.500" r="1.300" fill="#2a2a60"/>
<path d="M413 284.500c2 .5 5 .5 7-.5-.5 3-2 4.500-3.500 4.500s-3-1.500-3.500-4z" fill="#5a1418"/>
<path d="M419 319l-1 12h5l1-7 1 7h4.500l-.5-13z" fill="#fafafa" stroke="#b8b8c8" stroke-width=".6"/>
<path d="M417.500 296l6-4 9.500-1 4 15-8 9.500-12.500-4z" fill="#e0283c" stroke="#8a1422" stroke-width=".7"/>
<path d="M420 293c3 2 7 1.500 9-1.500l-3-1.500z" fill="#fff"/>
<path d="M430 293l6 6-3 8-4-6z" fill="#ee5064"/>
<path d="M404 296c3-3 9-3 13 0l1.500 14c0 5-3 8-7.500 8-4 0-7-4-7-9z" fill="#3c1d1e" stroke="#1e0c0c" stroke-width=".6"/>
<path d="M407 300l4 6 4-6" stroke="#7a3430" stroke-width="1" fill="none"/>
<path d="M416 305l5 5-2 3-5-4z" fill="#fbdcc0"/>
<path d="M410.500 333c2-2.500 6-3 9-1.500l2 0c2-1.500 6-1.500 9 0 1 2 0 4-2 5h-16c-2-.5-3-2-2-3.500z" fill="#d61f30" stroke="#7c1018" stroke-width=".6"/>
</g>
<!-- boy -->
<g>
<path d="M349 273l8-2-2-8 7 5 2-8 4 7 5-7.500 2 7.500 8-5-2 8 11-2-6 7 10 4-9 3 6 7-8-1 1 7-6-4-8 5-10-6c-7-2-11-6-13-17z" fill="#f26a1e" stroke="#a23c0c" stroke-width=".7"/>
<ellipse cx="362.500" cy="285" rx="11.500" ry="10.500" fill="#fbd8b6" stroke="#b8865c" stroke-width=".6"/>
<path d="M354 276c4-5 13-6 20-1-1 4-4 5-7 4-4 2-9 1-13-3z" fill="#f26a1e"/>
<ellipse cx="377" cy="289" rx="2.800" ry="3.200" fill="#fbd8b6" stroke="#b8865c" stroke-width=".6"/>
<ellipse cx="366" cy="292" rx="3.800" ry="3.500" fill="#ea5230"/>
<ellipse cx="355.500" cy="281.500" rx="2.300" ry="3" fill="#fff" stroke="#444" stroke-width=".5"/><ellipse cx="362" cy="284" rx="2.300" ry="3" fill="#fff" stroke="#444" stroke-width=".5"/>
<circle cx="355.800" cy="282.500" r="1" fill="#111"/><circle cx="362" cy="285" r="1" fill="#111"/>
<ellipse cx="358.500" cy="293" rx="1.200" ry="1.600" fill="#7a1c1c"/>
<path d="M361 322l34 4 3.500 8.500-13 2-8-7-9 6.500-8.500-7z" fill="#1d3cc6" stroke="#0c1c70" stroke-width=".7"/>
<path d="M365 302l19-4.500 6.500 17-7 8.500-17-2z" fill="#f5e93a" stroke="#a89a18" stroke-width=".7"/>
<path d="M366 303l-7 8 3 3 6-5zM386 300l11 9-2 3-11-5z" fill="#f5e93a" stroke="#a89a18" stroke-width=".6"/>
<path d="M357 311l3-1 2 3-2 3-3-1zM396 309l5 1 1 3-4 2-3-3z" fill="#fbd8b6" stroke="#b8865c" stroke-width=".5"/>
<ellipse cx="359.500" cy="332.500" rx="5.500" ry="3.600" fill="#b4161f" stroke="#5c0a10" stroke-width=".6" transform="rotate(35 359.500 332.500)"/>
<ellipse cx="402.500" cy="330.500" rx="4.600" ry="5.400" fill="#b4161f" stroke="#5c0a10" stroke-width=".6" transform="rotate(-25 402.500 330.500)"/>
</g>
</g>
<!--C1-->
</svg>
<div class="stitle">Остановка «Проверяй-ка»</div>
<div class="gbox"><div>Можно встретить знак такой</div><div>На дороге скоростной,</div><div>Где больших размеров яма,</div><div>И ходить опасно прямо,</div><div>Там где строиться район,</div><div>Школа, дом иль стадион.</div></div>
<div class="ans" style="left:130px;top:211px">А)Дорожные работы.</div>
<div class="ans" style="left:99px;top:241px">Б)Движение без остановки запрещено.</div>
<div class="ans" style="left:82px;top:271px">В)Въезд запрещён.</div>

</div>
<div class="rscroll"><div class="sbtn" style="top:1px"><i class="up"></i></div><div class="sthumb" style="top:252px;height:16px"></div><div class="sbtn" style="top:320px"><i class="dn"></i></div><div class="sbtn" style="top:329px;background:none"><i class="up" style="border-bottom-color:#777"></i></div><div class="sbtn" style="top:338px;background:none"><i class="dn" style="border-top-color:#777"></i></div></div>
<div class="notesline"></div>
<div class="t" style="left:145px;top:449px;font-size:8px;color:#555">Заметки к слайду</div>
<div class="status">
 <div class="t" style="left:3px;top:3px">Слайд 15 из 18</div>
 <svg class="abs" style="left:54px;top:2px" width="9" height="8" viewBox="0 0 9 8"><path d="M.5.5h5v6h-5zM3 3.500h5v4H3z" fill="none" stroke="#888" stroke-width=".8"/></svg>
 <div class="t" style="left:67px;top:3px">русский</div>
 <svg class="abs" style="left:599px;top:3px" width="7" height="7" viewBox="0 0 7 7"><path d="M.5 6.500h6M3.500 5V1M2 2.500L3.500 1 5 2.500" fill="none" stroke="#666" stroke-width=".8"/></svg>
 <div class="t" style="left:608px;top:3px">Заметки</div>
 <svg class="abs" style="left:639px;top:2.500px" width="8" height="8" viewBox="0 0 8 8"><path d="M.5.5h7v4.500H4L2.500 7V5h-2z" fill="#555"/></svg>
 <div class="t" style="left:649px;top:3px">Примечания</div>
 <div class="abs" style="left:692px;top:0;width:18px;height:13px;background:#cfcfcf"></div>
 <svg class="abs" style="left:697px;top:2px" width="70" height="9" viewBox="0 0 70 9"><g fill="none" stroke="#666" stroke-width=".9"><path d="M1 1h7v6.500H1zM3.500 1v6.500"/><path d="M21 1h2.500v2.500H21zM25 1h2.500v2.500H25zM21 5h2.500v2.500H21zM25 5h2.500v2.500H25z" stroke-width=".7"/><path d="M40 1h6v6.500h-6zM41 3h2M41 5h2"/><path d="M58 1h7M59 1v4h5V1M61.500 5v2.500"/></g></svg>
 <div class="abs" style="left:771px;top:6px;width:5px;height:1px;background:#555"></div>
 <div class="abs" style="left:779px;top:6px;width:56px;height:1px;background:#aaa"></div>
 <div class="abs" style="left:797px;top:2px;width:2px;height:9px;background:#555"></div>
 <div class="abs" style="left:835px;top:6px;width:5px;height:1px;background:#555"></div><div class="abs" style="left:837px;top:4px;width:1px;height:5px;background:#555"></div>
 <div class="t" style="left:846px;top:3px">83%</div>
 <svg class="abs" style="left:864px;top:2px" width="9" height="9" viewBox="0 0 9 9"><path d="M.5.5h8v8h-8zM4.500 2v5M3 3l-1 1.500L3 6M6 3l1 1.500L6 6" fill="none" stroke="#555" stroke-width=".8"/></svg>
</div>

</div>
<svg width="0" height="0" style="position:absolute"><filter id="b0" x="-5%" y="-5%" width="110%" height="110%"><feGaussianBlur stdDeviation="0.45"/></filter><filter id="b1" x="-10%" y="-10%" width="120%" height="120%"><feGaussianBlur stdDeviation="0.8"/></filter><filter id="b2" x="-10%" y="-10%" width="120%" height="120%"><feGaussianBlur stdDeviation="1.6"/></filter></svg>
<div id="grid">
<div id="active"></div><div id="morebtn"><svg width="9" height="6" viewBox="0 0 9 6"><path d="M1 1l3.500 3.500L8 1" fill="none" stroke="#ddd" stroke-width="1.300"/></svg></div><div id="handle"></div>
<div class="tile" style="left:919px;top:111px"><div class="vid av1"><svg viewBox="0 0 54 45" width="54" height="45"><rect width="54" height="45" fill="#f1f1f4"/><g filter="url(#b1)"><ellipse cx="16" cy="3" rx="3" ry="4" fill="#1c1c22"/><path d="M41 2c8 1 12 9 12 19 0 6-3 9-6 6-2-9-4-15-6-25z" fill="#3a1218"/><path d="M44 5c4 3 6 9 6 15" stroke="#8a2632" stroke-width="2" fill="none"/><path d="M9 24C9 8 19 1 30 2c12 1 19 10 19 24 0 9-3 15-7 20H14c-3-6-5-13-5-22z" fill="#b3b8d8"/><ellipse cx="24" cy="13" rx="10" ry="8" fill="#cdd1ea"/><path d="M14 30c4-10 10-18 20-22" stroke="#dfe2f2" stroke-width="2.500" fill="none"/><path d="M38 10c4 6 6 14 5 24" stroke="#9096bc" stroke-width="2" fill="none"/><ellipse cx="28" cy="37" rx="10" ry="7" fill="#f2eff3"/><ellipse cx="32" cy="28" rx="5" ry="2.200" fill="#4e4264"/><ellipse cx="20" cy="29" rx="3" ry="1.500" fill="#6a6088"/><ellipse cx="6" cy="37" rx="6" ry="7" fill="#c4c4ce"/><ellipse cx="12" cy="42" rx="5" ry="3" fill="#a8a8b6"/><ellipse cx="5" cy="14" rx="4" ry="9" fill="#e2e2ea"/></g></svg>
</div><svg class="hand" viewBox="0 0 12.500 16"><path d="M.3 5.200c0-1.300 1.900-1.300 2 0V2.800c0-1.400 2-1.400 2.100 0V1.600c0-1.500 2.100-1.500 2.200 0v1.400c0-1.300 2-1.300 2.100 0v6.300l1.700-1.600c1-.9 2.300.3 1.500 1.400l-3 4.200C7.800 15.200 6.400 16 4.600 16 1.900 16 .3 14.200.3 11.500z" fill="#f7c02e"/><path d="M2.300 5v4M4.400 3v6M6.600 3.500v5.500" stroke="#e8a51c" stroke-width=".5" fill="none"/></svg><svg class="mic" viewBox="0 0 10 12"><rect x="2.900" y=".4" width="4.400" height="7.200" rx="2.200" fill="#ea3d44"/><rect x="4" y="1.500" width="1.600" height="4.500" rx=".8" fill="#f58a8e"/><path d="M1.300 5.400c0 2.400 1.600 3.900 3.800 3.900s3.800-1.500 3.800-3.900M5.100 9.300v2M3 11.400h4.200" stroke="#e2383f" stroke-width="1.300" fill="none" stroke-linecap="round"/><path d="M9 .6 1.200 11" stroke="#e2383f" stroke-width="1.300" stroke-linecap="round"/></svg><div class="nm m">Сания Абдрасилова</div></div>
<div class="tile" style="left:1030px;top:111px"><div class="vid av2"><svg viewBox="0 0 54 56" width="54" height="56"><rect width="54" height="56" fill="#050505"/><g filter="url(#b1)"><path d="M7 30c1-12 10-20 21-20s19 7 20 19c-1 6-5 9-8 5-4-9-20-9-24 0-3 4-8 2-9-4z" fill="#a85a2c"/><path d="M10 22l-4 8M46 20l4 10M14 14l-5 4M42 13l5 5" stroke="#8a4a26" stroke-width="2" fill="none"/><rect x="15" y="27" width="25" height="23" rx="3" fill="#c98d5c"/><path d="M14 24h5v26h-5zM36 24h5v26h-5z" fill="#b8673c"/><path d="M15 25c4-7 19-7 25 0l-2 8c-4-4-17-4-21 0z" fill="#8e4824"/><path d="M20 11l3-4 3 3 2-5 3 5 3-3 2 4-2 4H22z" fill="#dcd6cc"/><ellipse cx="33" cy="32" rx="1.600" ry="1.400" fill="#2a1a12"/><ellipse cx="23" cy="32" rx="1.600" ry="1.400" fill="#4a2a18"/><path d="M23 43c3 1.500 7 1.500 10 0" stroke="#9a6238" stroke-width="1" fill="none"/></g></svg>
</div><svg class="hand" viewBox="0 0 12.500 16"><path d="M.3 5.200c0-1.300 1.900-1.300 2 0V2.800c0-1.400 2-1.400 2.100 0V1.600c0-1.500 2.100-1.500 2.200 0v1.400c0-1.300 2-1.300 2.100 0v6.300l1.700-1.600c1-.9 2.300.3 1.500 1.400l-3 4.200C7.800 15.200 6.400 16 4.600 16 1.900 16 .3 14.200.3 11.500z" fill="#f7c02e"/><path d="M2.300 5v4M4.400 3v6M6.600 3.500v5.500" stroke="#e8a51c" stroke-width=".5" fill="none"/></svg><svg class="mic" viewBox="0 0 10 12"><rect x="2.900" y=".4" width="4.400" height="7.200" rx="2.200" fill="#ea3d44"/><rect x="4" y="1.500" width="1.600" height="4.500" rx=".8" fill="#f58a8e"/><path d="M1.300 5.400c0 2.400 1.600 3.900 3.800 3.900s3.800-1.500 3.800-3.900M5.100 9.300v2M3 11.400h4.200" stroke="#e2383f" stroke-width="1.300" fill="none" stroke-linecap="round"/><path d="M9 .6 1.200 11" stroke="#e2383f" stroke-width="1.300" stroke-linecap="round"/></svg><div class="nm m">Safa Abaeywa</div></div>
<div class="tile" style="left:1141px;top:111px"><div class="vid v3"><svg viewBox="0 0 80 62" width="80" height="62"><rect width="80" height="62" fill="#848c84"/><g filter="url(#b2)"><rect x="-4" y="-4" width="18" height="70" fill="#6c7268"/><rect x="12" y="-4" width="72" height="18" fill="#8a938c"/><path d="M48 12h38v26H54z" fill="#93aab8"/><path d="M52 30h34v38H52z" fill="#e8eff6"/><path d="M56 20l20 6-4 8-18-4z" fill="#6f8ea6"/><path d="M16 14l20-5v53H6z" fill="#8e8874"/><ellipse cx="15" cy="36" rx="3.500" ry="5" fill="#e2dcc6"/><ellipse cx="22" cy="22" rx="4" ry="4" fill="#c8c2ac"/><ellipse cx="37" cy="38" rx="14" ry="18" fill="#bd8674"/><ellipse cx="37" cy="28" rx="11" ry="7" fill="#d2a08e"/><ellipse cx="38" cy="19" rx="13" ry="6" fill="#9a8674"/><ellipse cx="51" cy="45" rx="4" ry="12" fill="#a89ab8"/><ellipse cx="37" cy="52" rx="5" ry="2" fill="#7a3c34"/></g></svg>
</div><svg class="hand" viewBox="0 0 12.500 16"><path d="M.3 5.200c0-1.300 1.900-1.300 2 0V2.800c0-1.400 2-1.400 2.100 0V1.600c0-1.500 2.100-1.500 2.200 0v1.400c0-1.300 2-1.300 2.100 0v6.300l1.700-1.600c1-.9 2.300.3 1.500 1.400l-3 4.200C7.800 15.200 6.400 16 4.600 16 1.900 16 .3 14.200.3 11.500z" fill="#f7c02e"/><path d="M2.300 5v4M4.400 3v6M6.600 3.500v5.500" stroke="#e8a51c" stroke-width=".5" fill="none"/></svg><svg class="mic" viewBox="0 0 10 12"><rect x="2.900" y=".4" width="4.400" height="7.200" rx="2.200" fill="#ea3d44"/><rect x="4" y="1.500" width="1.600" height="4.500" rx=".8" fill="#f58a8e"/><path d="M1.300 5.400c0 2.400 1.600 3.900 3.800 3.900s3.800-1.500 3.800-3.900M5.100 9.300v2M3 11.400h4.200" stroke="#e2383f" stroke-width="1.300" fill="none" stroke-linecap="round"/><path d="M9 .6 1.200 11" stroke="#e2383f" stroke-width="1.300" stroke-linecap="round"/></svg><div class="nm m">Кушукбаева Кира</div></div>
<div class="tile" style="left:919px;top:176px"><div class="big">Дэльвин</div><svg class="hand" viewBox="0 0 12.500 16"><path d="M.3 5.200c0-1.300 1.900-1.300 2 0V2.800c0-1.400 2-1.400 2.100 0V1.600c0-1.500 2.100-1.500 2.200 0v1.400c0-1.300 2-1.300 2.100 0v6.300l1.700-1.600c1-.9 2.300.3 1.500 1.400l-3 4.200C7.800 15.200 6.400 16 4.600 16 1.900 16 .3 14.200.3 11.500z" fill="#f7c02e"/><path d="M2.300 5v4M4.400 3v6M6.600 3.500v5.500" stroke="#e8a51c" stroke-width=".5" fill="none"/></svg><svg class="mic" viewBox="0 0 10 12"><rect x="2.900" y=".4" width="4.400" height="7.200" rx="2.200" fill="#ea3d44"/><rect x="4" y="1.500" width="1.600" height="4.500" rx=".8" fill="#f58a8e"/><path d="M1.300 5.400c0 2.400 1.600 3.900 3.800 3.900s3.800-1.500 3.800-3.900M5.100 9.300v2M3 11.400h4.200" stroke="#e2383f" stroke-width="1.300" fill="none" stroke-linecap="round"/><path d="M9 .6 1.200 11" stroke="#e2383f" stroke-width="1.300" stroke-linecap="round"/></svg><div class="nm m">Дэльвин</div></div>
<div class="tile" style="left:1030px;top:176px"><div class="big">Наргиза  Имино…</div><svg class="mic" viewBox="0 0 10 12"><rect x="2.900" y=".4" width="4.400" height="7.200" rx="2.200" fill="#ea3d44"/><rect x="4" y="1.500" width="1.600" height="4.500" rx=".8" fill="#f58a8e"/><path d="M1.300 5.400c0 2.400 1.600 3.900 3.800 3.900s3.800-1.500 3.800-3.900M5.100 9.300v2M3 11.400h4.200" stroke="#e2383f" stroke-width="1.300" fill="none" stroke-linecap="round"/><path d="M9 .6 1.200 11" stroke="#e2383f" stroke-width="1.300" stroke-linecap="round"/></svg><div class="nm m">Наргиза Иминова Ги…</div></div>
<div class="tile" style="left:1141px;top:176px"><div class="big">Аня Кривко</div><div class="nm">Аня Кривко</div></div>
<div class="tile" style="left:919px;top:242px"><div class="big">Гиричева Ника.</div><svg class="mic" viewBox="0 0 10 12"><rect x="2.900" y=".4" width="4.400" height="7.200" rx="2.200" fill="#ea3d44"/><rect x="4" y="1.500" width="1.600" height="4.500" rx=".8" fill="#f58a8e"/><path d="M1.300 5.400c0 2.400 1.600 3.900 3.800 3.900s3.800-1.500 3.800-3.900M5.100 9.300v2M3 11.400h4.200" stroke="#e2383f" stroke-width="1.300" fill="none" stroke-linecap="round"/><path d="M9 .6 1.200 11" stroke="#e2383f" stroke-width="1.300" stroke-linecap="round"/></svg><div class="nm m">Гиричева Ника.</div></div>
<div class="tile" style="left:1030px;top:242px"><div class="vid v8"><svg viewBox="0 0 107 62" width="107" height="62"><rect width="107" height="62" fill="#ada8a4"/><g filter="url(#b2)"><rect x="-5" y="-5" width="40" height="34" fill="#a39e99"/><rect x="30" y="-5" width="45" height="36" fill="#bdb8b6"/><rect x="68" y="-5" width="45" height="75" fill="#dcdcdf"/><rect x="76" y="-5" width="8" height="75" fill="#efeff1"/><rect x="92" y="-5" width="20" height="75" fill="#ebebee"/><rect x="-5" y="28" width="18" height="40" fill="#8a837e"/><ellipse cx="14" cy="43" rx="7" ry="6" fill="#a87a3c"/><ellipse cx="53" cy="46" rx="11" ry="9" fill="#74747a"/><ellipse cx="62" cy="38" rx="8" ry="5" fill="#c9bfc0"/><ellipse cx="33" cy="45" rx="9" ry="9" fill="#c4a498"/><path d="M21 38c0-9 5-14 12-14s12 5 12 13c-3 3-7-4-12-4s-8 6-12 5z" fill="#3a3031"/><rect x="-5" y="51" width="100" height="16" fill="#66646a"/></g></svg>
</div><div class="nm">Абдильдаева Севинч)</div></div>
<div class="tile" style="left:1141px;top:242px"><div class="vid v9"><svg viewBox="0 0 46 62" width="46" height="62"><rect width="46" height="62" fill="#1b2020"/><g filter="url(#b2)"><rect x="-4" y="-4" width="54" height="22" fill="#59625f"/><rect x="-4" y="14" width="26" height="20" fill="#3f4745"/><rect x="20" y="-4" width="20" height="14" fill="#6c7572"/><ellipse cx="36" cy="40" rx="12" ry="22" fill="#0d1212"/><ellipse cx="16" cy="40" rx="8" ry="11" fill="#d0b09c"/><ellipse cx="15" cy="32" rx="7" ry="5" fill="#e0c8b4"/><ellipse cx="24" cy="36" rx="3" ry="10" fill="#2a2220"/><ellipse cx="34" cy="57" rx="7" ry="3" fill="#d8b8a0"/><ellipse cx="26" cy="58" rx="6" ry="5" fill="#4a4240"/></g></svg>
</div><div class="nm">Aida Khalelova</div></div>
<div class="tile" style="left:919px;top:307px"><div class="vid v10"><svg viewBox="0 0 107 62" width="107" height="62"><rect width="107" height="62" fill="#c0c4cd"/><g filter="url(#b2)"><rect x="-5" y="-5" width="45" height="75" fill="#b6bbc6"/><rect x="72" y="-5" width="45" height="75" fill="#c8ccd4"/><path d="M28 32c-1-18 8-30 22-30s23 11 22 28c0 5-2 9-4 7-2-13-8-20-18-20s-16 7-18 21c-2 3-4-1-4-5z" fill="#5e4036"/><ellipse cx="50" cy="33" rx="17.500" ry="21" fill="#c8a090"/><ellipse cx="50" cy="14" rx="13" ry="6" fill="#8a6250"/><ellipse cx="41.500" cy="29" rx="3.500" ry="1.200" fill="#4a342e"/><ellipse cx="58.500" cy="29" rx="3.500" ry="1.200" fill="#4a342e"/><ellipse cx="50" cy="38" rx="2.500" ry="3" fill="#b88878"/><ellipse cx="50" cy="47" rx="4.500" ry="1.400" fill="#8a4648"/><rect x="26" y="54" width="54" height="16" rx="6" fill="#7e7e88"/></g></svg>
</div><div class="nm">Рахманкул Жансая Г25М</div></div>
<div class="tile" style="left:1030px;top:307px"><div class="big">Тамерлан  Русте…</div><div class="nm">Тамерлан Рустемулы</div></div>
<div class="tile" style="left:1141px;top:307px"><div class="big">Курманов  Дим…</div><svg class="mic" viewBox="0 0 10 12"><rect x="2.900" y=".4" width="4.400" height="7.200" rx="2.200" fill="#ea3d44"/><rect x="4" y="1.500" width="1.600" height="4.500" rx=".8" fill="#f58a8e"/><path d="M1.300 5.400c0 2.400 1.600 3.900 3.800 3.900s3.800-1.500 3.800-3.900M5.100 9.300v2M3 11.400h4.200" stroke="#e2383f" stroke-width="1.300" fill="none" stroke-linecap="round"/><path d="M9 .6 1.200 11" stroke="#e2383f" stroke-width="1.300" stroke-linecap="round"/></svg><div class="nm m">Курманов Димаш</div></div>
<div class="tile" style="left:919px;top:372px"><div class="vid v13"><svg viewBox="0 0 107 62" width="107" height="62"><rect width="107" height="62" fill="#d6c4c5"/><g filter="url(#b2)"><rect x="-5" y="-5" width="24" height="75" fill="#8e8187"/><rect x="15" y="-5" width="60" height="20" fill="#c9babb"/><rect x="70" y="-5" width="45" height="75" fill="#e9f0f0"/><rect x="46" y="18" width="24" height="26" fill="#efd9d9"/><rect x="8" y="34" width="44" height="16" fill="#3e2c30"/><rect x="30" y="37" width="22" height="12" fill="#6a3a40"/><rect x="-5" y="48" width="60" height="20" fill="#85797c"/><ellipse cx="84" cy="40" rx="15" ry="16" fill="#6a6052"/><ellipse cx="72" cy="44" rx="6" ry="9" fill="#b89c84"/><ellipse cx="94" cy="59" rx="14" ry="7" fill="#c2d6d6"/><ellipse cx="60" cy="51" rx="10" ry="5" fill="#c4c4ce"/><rect x="96" y="10" width="10" height="30" fill="#c9d6d2"/></g><rect x="20" y="17" width="24" height="14" fill="#151013" filter="url(#b1)"/></svg>
</div><svg class="mic" viewBox="0 0 10 12"><rect x="2.900" y=".4" width="4.400" height="7.200" rx="2.200" fill="#ea3d44"/><rect x="4" y="1.500" width="1.600" height="4.500" rx=".8" fill="#f58a8e"/><path d="M1.300 5.400c0 2.400 1.600 3.900 3.800 3.900s3.800-1.500 3.800-3.900M5.100 9.300v2M3 11.400h4.200" stroke="#e2383f" stroke-width="1.300" fill="none" stroke-linecap="round"/><path d="M9 .6 1.200 11" stroke="#e2383f" stroke-width="1.300" stroke-linecap="round"/></svg><div class="nm m">ВОЛКОВ ЮРИЙ</div></div>
<div class="tile" style="left:1030px;top:372px"><div class="big">Катя  Пустовало…</div><svg class="mic" viewBox="0 0 10 12"><rect x="2.900" y=".4" width="4.400" height="7.200" rx="2.200" fill="#ea3d44"/><rect x="4" y="1.500" width="1.600" height="4.500" rx=".8" fill="#f58a8e"/><path d="M1.300 5.400c0 2.400 1.600 3.900 3.800 3.900s3.800-1.500 3.800-3.900M5.100 9.300v2M3 11.400h4.200" stroke="#e2383f" stroke-width="1.300" fill="none" stroke-linecap="round"/><path d="M9 .6 1.200 11" stroke="#e2383f" stroke-width="1.300" stroke-linecap="round"/></svg><div class="nm m">Катя Пустовалова</div></div>
<div class="tile" style="left:1141px;top:372px"><div class="big">Алихан Билялов</div><svg class="mic" viewBox="0 0 10 12"><rect x="2.900" y=".4" width="4.400" height="7.200" rx="2.200" fill="#ea3d44"/><rect x="4" y="1.500" width="1.600" height="4.500" rx=".8" fill="#f58a8e"/><path d="M1.300 5.400c0 2.400 1.600 3.900 3.800 3.900s3.800-1.500 3.800-3.900M5.100 9.300v2M3 11.400h4.200" stroke="#e2383f" stroke-width="1.300" fill="none" stroke-linecap="round"/><path d="M9 .6 1.200 11" stroke="#e2383f" stroke-width="1.300" stroke-linecap="round"/></svg><div class="nm m">Алихан Билялов</div></div>
<div class="tile" style="left:919px;top:438px"><div class="big">Урисов Арыстан</div><svg class="mic" viewBox="0 0 10 12"><rect x="2.900" y=".4" width="4.400" height="7.200" rx="2.200" fill="#ea3d44"/><rect x="4" y="1.500" width="1.600" height="4.500" rx=".8" fill="#f58a8e"/><path d="M1.300 5.400c0 2.400 1.600 3.900 3.800 3.900s3.800-1.500 3.800-3.900M5.100 9.300v2M3 11.400h4.200" stroke="#e2383f" stroke-width="1.300" fill="none" stroke-linecap="round"/><path d="M9 .6 1.200 11" stroke="#e2383f" stroke-width="1.300" stroke-linecap="round"/></svg><div class="nm m">Урисов Арыстан</div></div>
<div class="tile" style="left:1030px;top:438px"><div class="vid v17"><svg viewBox="0 0 107 62" width="107" height="62"><rect width="107" height="62" fill="#d8d6d6"/><g filter="url(#b2)"><path d="M-5-5h120v22L20 32-5 22z" fill="#e4dfcc"/><path d="M-5 8L40-4h12L-5 15z" fill="#9a9282"/><path d="M14 24L112 1v9L16 33z" fill="#a0977f"/><path d="M18 31L112 12v8L20 42z" fill="#f2efe2"/><rect x="82" y="26" width="30" height="40" fill="#6a5854"/><rect x="78" y="24" width="6" height="40" fill="#9a8a84"/><rect x="60" y="36" width="16" height="11" fill="#54443e"/><rect x="63" y="38" width="9" height="5" fill="#6a7aa0"/><rect x="31" y="41" width="10" height="9" fill="#4a78c0"/><ellipse cx="48" cy="37" rx="3" ry="5" fill="#352a26"/><rect x="47" y="40" width="2" height="9" fill="#bdb8b4"/><circle cx="27" cy="9" r="1.500" fill="#5a5248"/><ellipse cx="6" cy="40" rx="14" ry="25" fill="#48292a"/><ellipse cx="3" cy="43" rx="11" ry="20" fill="#cca094"/><ellipse cx="5" cy="38" rx="4" ry="1" fill="#7a4a48"/></g></svg>
</div><svg class="mic" viewBox="0 0 10 12"><rect x="2.900" y=".4" width="4.400" height="7.200" rx="2.200" fill="#ea3d44"/><rect x="4" y="1.500" width="1.600" height="4.500" rx=".8" fill="#f58a8e"/><path d="M1.300 5.400c0 2.400 1.600 3.900 3.800 3.900s3.800-1.500 3.800-3.900M5.100 9.300v2M3 11.400h4.200" stroke="#e2383f" stroke-width="1.300" fill="none" stroke-linecap="round"/><path d="M9 .6 1.200 11" stroke="#e2383f" stroke-width="1.300" stroke-linecap="round"/></svg><div class="nm m">Инесса Поплавская</div></div>
<div class="tile" style="left:1141px;top:438px"><div class="big">Орлова Дарья</div><svg class="mic" viewBox="0 0 10 12"><rect x="2.900" y=".4" width="4.400" height="7.200" rx="2.200" fill="#ea3d44"/><rect x="4" y="1.500" width="1.600" height="4.500" rx=".8" fill="#f58a8e"/><path d="M1.300 5.400c0 2.400 1.600 3.900 3.800 3.900s3.800-1.500 3.800-3.900M5.100 9.300v2M3 11.400h4.200" stroke="#e2383f" stroke-width="1.300" fill="none" stroke-linecap="round"/><path d="M9 .6 1.200 11" stroke="#e2383f" stroke-width="1.300" stroke-linecap="round"/></svg><div class="nm m">Орлова Дарья</div></div>
<div class="tile" style="left:919px;top:503px"><div class="vid v19"><svg viewBox="0 0 80 62" width="80" height="62"><rect width="80" height="62" fill="#a69aa6"/><g filter="url(#b2)"><rect x="-5" y="-5" width="90" height="12" fill="#d8b89c"/><rect x="-5" y="6" width="30" height="60" fill="#8e8486"/><rect x="52" y="6" width="34" height="60" fill="#ab9fb0"/><path d="M20 30c0-12 10-20 22-18 8 2 14 10 14 20 0 8-6 16-16 16-12 0-20-8-20-18z" fill="#b88a5c"/><path d="M24 44c6-4 14-2 22 4l-4 20H14z" fill="#c9a880"/><ellipse cx="49" cy="43" rx="6" ry="4" fill="#e0d4c4"/><path d="M36 18l10 20-4 2z" fill="#e8dccc"/><ellipse cx="33" cy="25" rx="5" ry="3" fill="#2a1c14"/><ellipse cx="52" cy="37" rx="3" ry="3" fill="#2a1a18"/><ellipse cx="54" cy="20" rx="3" ry="3" fill="#302418"/><path d="M8 0l12 14 4 12 3-2-2-14L26 0h-3l-3 10z" fill="#3a2c28"/><path d="M44 12L56-2h3L50 14z" fill="#4a3830"/><path d="M60 30l8-30h2l-8 32z" fill="#4a3a38"/><ellipse cx="10" cy="46" rx="7" ry="4" fill="#c4a494"/></g></svg>
</div><svg class="mic" viewBox="0 0 10 12"><rect x="2.900" y=".4" width="4.400" height="7.200" rx="2.200" fill="#ea3d44"/><rect x="4" y="1.500" width="1.600" height="4.500" rx=".8" fill="#f58a8e"/><path d="M1.300 5.400c0 2.400 1.600 3.900 3.800 3.900s3.800-1.500 3.800-3.900M5.100 9.300v2M3 11.400h4.200" stroke="#e2383f" stroke-width="1.300" fill="none" stroke-linecap="round"/><path d="M9 .6 1.200 11" stroke="#e2383f" stroke-width="1.300" stroke-linecap="round"/></svg><div class="nm m">Айсаров Дамир</div></div>
<div class="tile" style="left:1030px;top:503px"><div class="vid v20"><svg viewBox="0 0 107 62" width="107" height="62"><rect width="107" height="62" fill="#857a68"/><g filter="url(#b2)"><path d="M-5-5h120v6L42 18-5 12z" fill="#dcd8ce"/><path d="M-5 10l42 6-6 12-20 5-16-7z" fill="#a59a8e"/><rect x="-5" y="27" width="32" height="24" fill="#f4f4f6"/><path d="M36 14h38v52H36z" fill="#7c705c"/><rect x="44" y="16" width="5" height="40" fill="#9a8e78"/><rect x="56" y="12" width="10" height="54" fill="#5e5448"/><path d="M73 21l40-19v64H75z" fill="#d6caa8"/><path d="M71 21L112-2v8L75 27z" fill="#ab94dc"/><rect x="67" y="22" width="6" height="26" fill="#5348b4"/><path d="M84 30c3-6 8-6 10 0v30H84z" fill="#c4b690"/><path d="M17 50l9-23 7 3-7 23z" fill="#e6d0cc"/><path d="M30 46c0-12 6-20 14-20s14 8 14 20v20H30z" fill="#46302c"/><ellipse cx="44" cy="43" rx="9" ry="11" fill="#c49888"/><ellipse cx="44" cy="50" rx="3" ry="1.500" fill="#8a4a48"/></g></svg>
</div><div class="nm">Дебора Шимони</div></div>
<div class="tile" style="left:1141px;top:503px"><div class="big"><span class="tofu">▯▯<i>e</i>▯▯▯▯▯ ▯<i>o</i>…</span></div><svg class="mic" viewBox="0 0 10 12"><rect x="2.900" y=".4" width="4.400" height="7.200" rx="2.200" fill="#ea3d44"/><rect x="4" y="1.500" width="1.600" height="4.500" rx=".8" fill="#f58a8e"/><path d="M1.300 5.400c0 2.400 1.600 3.900 3.800 3.900s3.800-1.500 3.800-3.900M5.100 9.300v2M3 11.400h4.200" stroke="#e2383f" stroke-width="1.300" fill="none" stroke-linecap="round"/><path d="M9 .6 1.200 11" stroke="#e2383f" stroke-width="1.300" stroke-linecap="round"/></svg><div class="nm m"><span class="fancy">Sheikina Voktoria</span></div></div>
<div class="tile" style="left:919px;top:569px"><div class="big">LeraLove and Jula</div><svg class="mic" viewBox="0 0 10 12"><rect x="2.900" y=".4" width="4.400" height="7.200" rx="2.200" fill="#ea3d44"/><rect x="4" y="1.500" width="1.600" height="4.500" rx=".8" fill="#f58a8e"/><path d="M1.300 5.400c0 2.400 1.600 3.900 3.800 3.900s3.800-1.500 3.800-3.900M5.100 9.300v2M3 11.400h4.200" stroke="#e2383f" stroke-width="1.300" fill="none" stroke-linecap="round"/><path d="M9 .6 1.200 11" stroke="#e2383f" stroke-width="1.300" stroke-linecap="round"/></svg><div class="nm m">LeraLove and Jula</div></div>
<div class="tile" style="left:1030px;top:569px"><div class="big">Лия Гидаева</div><svg class="mic" viewBox="0 0 10 12"><rect x="2.900" y=".4" width="4.400" height="7.200" rx="2.200" fill="#ea3d44"/><rect x="4" y="1.500" width="1.600" height="4.500" rx=".8" fill="#f58a8e"/><path d="M1.300 5.400c0 2.400 1.600 3.900 3.800 3.900s3.800-1.500 3.800-3.900M5.100 9.300v2M3 11.400h4.200" stroke="#e2383f" stroke-width="1.300" fill="none" stroke-linecap="round"/><path d="M9 .6 1.200 11" stroke="#e2383f" stroke-width="1.300" stroke-linecap="round"/></svg><div class="nm m">Лия Гидаева</div></div>
<div class="tile" style="left:1141px;top:569px"><div class="big">Asanova Janel:0</div><svg class="mic" viewBox="0 0 10 12"><rect x="2.900" y=".4" width="4.400" height="7.200" rx="2.200" fill="#ea3d44"/><rect x="4" y="1.500" width="1.600" height="4.500" rx=".8" fill="#f58a8e"/><path d="M1.300 5.400c0 2.400 1.600 3.900 3.800 3.900s3.800-1.500 3.800-3.900M5.100 9.300v2M3 11.400h4.200" stroke="#e2383f" stroke-width="1.300" fill="none" stroke-linecap="round"/><path d="M9 .6 1.200 11" stroke="#e2383f" stroke-width="1.300" stroke-linecap="round"/></svg><div class="nm m">Asanova Janel:0</div></div>

</div>
<div id="toolbar">
<svg class="abs" style="left:0;top:4px" width="1280" height="28" viewBox="0 676 1280 28">
 <!-- mic -->
 <g fill="#cdc6c6"><rect x="32" y="685" width="6" height="10" rx="3"/><path d="M29.800 691.500c0 3 2.300 5 5.200 5s5.200-2 5.200-5" fill="none" stroke="#cdc6c6" stroke-width="1.200"/><rect x="34.400" y="696.500" width="1.200" height="3"/><rect x="32" y="699" width="6" height="1.200" rx=".6"/></g>
 <path d="M26 699.700L42 684" stroke="#e0444a" stroke-width="1.200"/>
 <path d="M56.500 694.500l2.800-2.800 2.800 2.800M135.500 694.500l2.800-2.800 2.800 2.800M585.500 694l2.600-2.600 2.600 2.600" fill="none" stroke="#c8c8c8" stroke-width="1.100"/>
 <!-- video -->
 <rect x="98.500" y="687" width="11.500" height="10.500" rx="2" fill="#cdc6c6"/><path d="M110.500 690.500l4.300-3v9.500l-4.300-3z" fill="#cdc6c6"/>
 <path d="M99 699.700L115.600 684" stroke="#e0444a" stroke-width="1.200"/>
 <!-- participants -->
 <g fill="#d4d4d4"><circle cx="549" cy="689.800" r="2.900"/><path d="M544.300 698.700c0-3.600 2-5.200 4.700-5.200s4.700 1.600 4.700 5.200z"/><circle cx="556.300" cy="690.300" r="2.400"/><path d="M554.600 698.700c0-2.600-.6-3.800-1.500-4.700.8-.5 1.800-.8 3-.8 2.400 0 4.300 1.500 4.300 5.500z"/></g>
 <!-- chat -->
 <path d="M617.500 686h10a2 2 0 0 1 2 2v5.500a2 2 0 0 1-2 2h-4.500l-3.500 3v-3h-2a2 2 0 0 1-2-2V688a2 2 0 0 1 2-2z" fill="#d4d4d4"/>
 <circle cx="630.300" cy="687.300" r="4.600" fill="#e2353c" stroke="#1a1a1a" stroke-width=".8"/>
 <!-- share -->
 <rect x="686.800" y="686.500" width="16.500" height="11.500" rx="2.200" fill="#23d959"/><path d="M695 689.300v6M692.600 691.600l2.400-2.400 2.400 2.400" fill="none" stroke="#0b3d1c" stroke-width="1.200"/>
 <!-- record -->
 <circle cx="768.300" cy="692.500" r="6" fill="none" stroke="#d4d4d4" stroke-width="1.100"/><circle cx="768.300" cy="692.500" r="4" fill="#d4d4d4"/>
 <!-- reactions -->
 <circle cx="821.500" cy="693.300" r="5.600" fill="#d4d4d4"/><circle cx="819.500" cy="692" r=".8" fill="#1a1a1a"/><circle cx="823.500" cy="692" r=".8" fill="#1a1a1a"/><path d="M818.800 694.600c1.400 1.800 4 1.800 5.400 0" fill="none" stroke="#1a1a1a" stroke-width=".9"/>
 <path d="M829.500 684v4.600M827.200 686.300h4.600" stroke="#d4d4d4" stroke-width="1.100"/>
</svg>
<div class="tb" style="left:34.500px">Включить звук</div>
<div class="tb" style="left:107px">Включить видео</div>
<div class="tb" style="left:553px">Участники</div>
<div class="tb" style="left:568px;top:686px;font-size:8px">26</div>
<div class="tb" style="left:630.300px;top:683px;font-size:6.500px;color:#fff;font-weight:bold">2</div>
<div class="tb" style="left:622px">Чат</div>
<div class="tb" style="left:695.500px;color:#23d959">Демонстрация экрана</div>
<div class="tb" style="left:768.300px">Запись</div>
<div class="tb" style="left:822px">Реакции</div>
<div id="leave">Выйти</div>
<div id="botstrip"></div><div id="bothandle"></div>

</div>
</body>
</html>
